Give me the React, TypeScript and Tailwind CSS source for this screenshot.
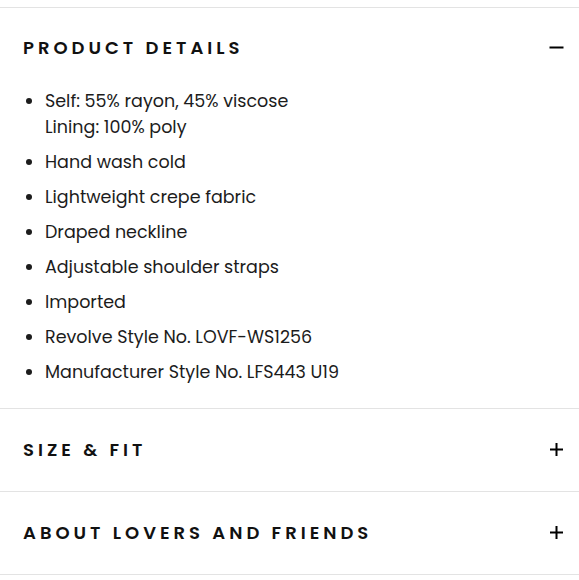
import React from 'react';

const details = [
    ['Self: 55% rayon, 45% viscose', 'Lining: 100% poly'],
    ['Hand wash cold'],
    ['Lightweight crepe fabric'],
    ['Draped neckline'],
    ['Adjustable shoulder straps'],
    ['Imported'],
    ['Revolve Style No. LOVF-WS1256'],
    ['Manufacturer Style No. LFS443 U19'],
];

const Minus = () => (
    <svg width="15" height="15" viewBox="0 0 15 15" className="text-black">
        <rect x="0.5" y="6.5" width="14" height="2" fill="currentColor" />
    </svg>
);

const Plus = () => (
    <svg width="15" height="15" viewBox="0 0 15 15" className="text-black">
        <rect x="1" y="6.5" width="13" height="2" fill="currentColor" />
        <rect x="6.5" y="1" width="2" height="13" fill="currentColor" />
    </svg>
);

const Header: React.FC<{ title: string; open?: boolean; height: string }> = ({ title, open, height }) => (
    <button className={`w-full flex items-center justify-between pl-[23px] pr-[15px] pb-[2px] ${height}`}>
        <span className="text-[18px] font-semibold uppercase tracking-[0.222em] text-[#111]">{title}</span>
        {open ? <Minus /> : <Plus />}
    </button>
);

export default function App() {
    return (
        <div className="min-h-screen bg-white pt-[7px]" style={{ fontFamily: '"Poppins", "Inter", sans-serif' }}>
            {/* Product details - expanded */}
            <section className="border-t border-[#e3e3e3]">
                <Header title="Product Details" open height="h-[80px]" />
                <ul className="list-disc pl-[45px] pr-6 pb-[23px] text-[17.5px] leading-[26px] text-[#1c1c1c]">
                    {details.map((lines, i) => (
                        <li key={i} className={i < details.length - 1 ? 'mb-[9px]' : ''}>
                            {lines.map((l, j) => (
                                <div key={j}>{l}</div>
                            ))}
                        </li>
                    ))}
                </ul>
            </section>

            <section className="border-t border-[#e3e3e3]">
                <Header title="Size & Fit" height="h-[82px]" />
            </section>

            <section className="border-t border-b border-[#e3e3e3]">
                <Header title="About Lovers and Friends" height="h-[82px]" />
            </section>
        </div>
    );
}
